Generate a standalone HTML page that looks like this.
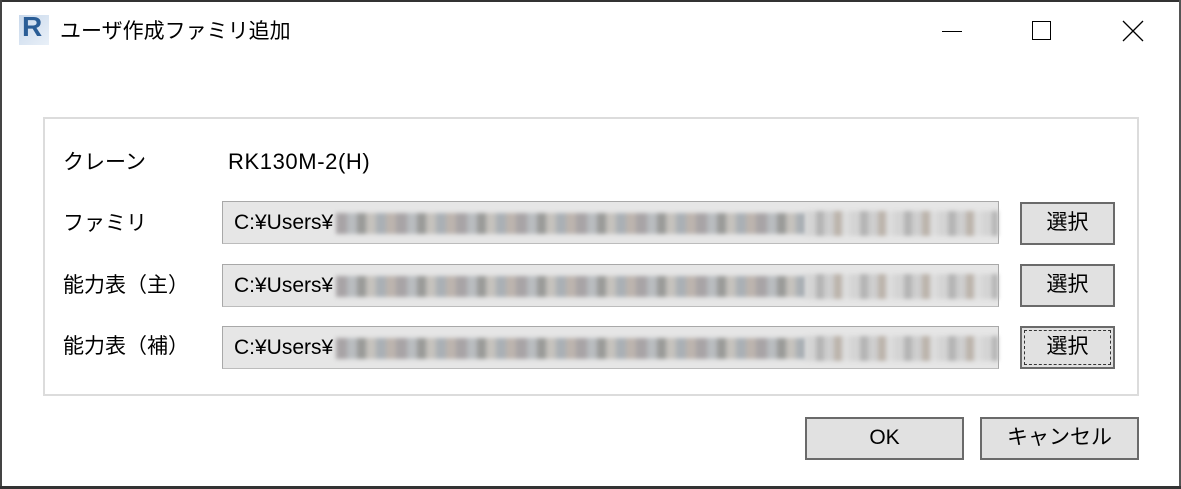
<!DOCTYPE html>
<html><head><meta charset="utf-8"><style>
*{margin:0;padding:0;box-sizing:border-box}
body{width:1181px;height:489px;overflow:hidden;background:#fff;position:relative;font-family:"Liberation Sans","Noto Sans CJK JP",sans-serif;color:#000}
.a{position:absolute}
.t{font-size:21px;line-height:24px;white-space:nowrap}
.fld{position:absolute;left:222px;width:777px;height:43px;background:#e6e6e6;border:1px solid #a8a8a8;border-bottom-color:#bcbcbc}
.fld span{position:absolute;left:11px;top:9px;font-size:21px;line-height:24px}
.blur{position:absolute;left:113px;top:11px;width:470px;height:21px;filter:blur(2px);
background:repeating-linear-gradient(90deg,#a8a4a6 0 11px,#b9bcbf 11px 21px,#9a9b99 21px 30px,#c5c2bd 30px 40px,#aab0b5 40px 50px,#bcb4ae 50px 60px)}
.blur2{position:absolute;left:583px;top:9px;width:192px;height:25px;filter:blur(2px);
background:repeating-linear-gradient(90deg,#d4d4d4 0 10px,#b4b4b4 10px 18px,#cecece 18px 28px,#bcb4ac 28px 36px,#dcdcdc 36px 44px)}
.btn{position:absolute;background:#e1e1e1;border:2px solid #6a6a6a;font-size:21px;text-align:center}
</style></head><body>
<div class="a" style="left:0;top:0;width:1181px;height:2px;background:#333"></div>
<div class="a" style="left:0;top:0;width:2px;height:489px;background:#444"></div>
<div class="a" style="left:1179px;top:0;width:2px;height:489px;background:#555"></div>
<div class="a" style="left:0;top:486px;width:1181px;height:3px;background:#333"></div>
<div class="a" style="left:19px;top:15px;width:30px;height:30px;background:linear-gradient(135deg,#c9d9ec,#e9f0f8)"></div>
<div class="a" style="left:22px;top:11px;font:bold 28px 'Liberation Sans',sans-serif;color:#2a5d96">R</div>
<div class="a t" style="left:60px;top:20px;font-size:21px">ユーザ作成ファミリ追加</div>
<div class="a" style="left:942px;top:31px;width:20px;height:1px;background:#000"></div>
<div class="a" style="left:1032px;top:21px;width:19px;height:19px;border:1px solid #000"></div>
<svg class="a" style="left:1122px;top:20px" width="22" height="22"><path d="M1 1L21 21M21 1L1 21" stroke="#000" stroke-width="1.3"/></svg>
<div class="a" style="left:43px;top:117px;width:1096px;height:279px;border:2px solid #dcdcdc"></div>
<div class="a t" style="left:63px;top:151px">クレーン</div>
<div class="a t" style="left:228px;top:149px;font-size:22px;line-height:26px;letter-spacing:0.6px">RK130M-2(H)</div>
<div class="a t" style="left:63px;top:212px">ファミリ</div>
<div class="a t" style="left:63px;top:274px">能力表（主）</div>
<div class="a t" style="left:63px;top:335px">能力表（補）</div>
<div class="fld" style="top:201px"><span>C:¥Users¥</span><div class="blur"></div><div class="blur2"></div></div>
<div class="fld" style="top:264px"><span>C:¥Users¥</span><div class="blur"></div><div class="blur2"></div></div>
<div class="fld" style="top:326px"><span>C:¥Users¥</span><div class="blur"></div><div class="blur2"></div></div>
<div class="btn" style="left:1020px;top:202px;width:95px;height:43px;line-height:38px">選択</div>
<div class="btn" style="left:1020px;top:264px;width:95px;height:43px;line-height:38px">選択</div>
<div class="btn" style="left:1020px;top:326px;width:95px;height:43px;line-height:38px"><div style="position:absolute;left:2px;top:2px;right:2px;bottom:2px;border:1px dashed #333"></div>選択</div>
<div class="btn" style="left:805px;top:417px;width:159px;height:43px;line-height:38px">OK</div>
<div class="btn" style="left:980px;top:417px;width:159px;height:43px;line-height:38px">キャンセル</div>
</body></html>
